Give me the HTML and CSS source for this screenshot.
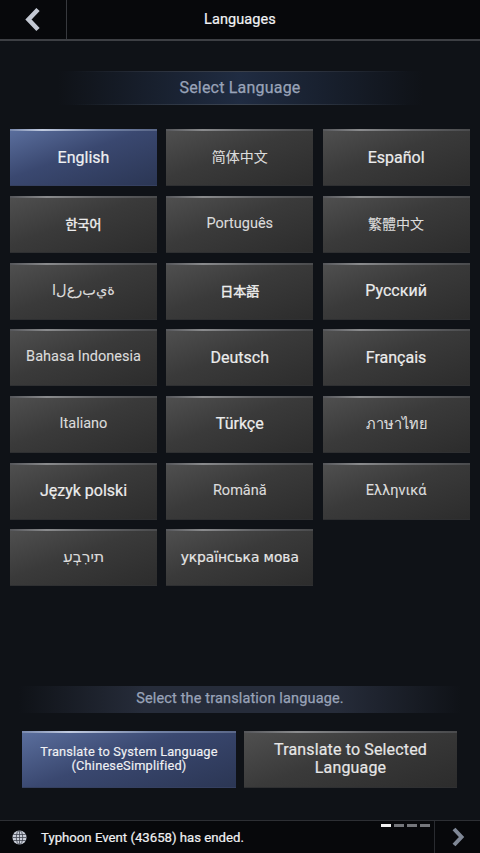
FILE: index.html
```html
<!DOCTYPE html>
<html lang="en">
<head>
<meta charset="utf-8">
<title>Languages</title>
<link rel="stylesheet" href="styles.css">
</head>
<body>
<div class="app">
  <header class="topbar">
    <button class="back" aria-label="Back">
      <svg width="18" height="26" viewBox="0 0 18 26"><path d="M14 2.500 L4.500 12.500 L14 22.500" fill="none" stroke="#c3c8d3" stroke-width="4.600"/></svg>
    </button>
    <h1 class="title">Languages</h1>
  </header>

  <main class="content">
    <div class="band band-select">Select Language</div>
    <div class="grid">
      <button class="btn active strong">English</button>
      <button class="btn cjk">简体中文</button>
      <button class="btn strong">Español</button>
      <button class="btn strong cjk">한국어</button>
      <button class="btn">Português</button>
      <button class="btn cjk">繁體中文</button>
      <button class="btn"><bdo dir="ltr">ا&zwnj;ل&zwnj;ع&zwnj;ر&zwnj;ب&zwnj;ي&zwnj;ة</bdo></button>
      <button class="btn strong cjk">日本語</button>
      <button class="btn strong">Русский</button>
      <button class="btn">Bahasa Indonesia</button>
      <button class="btn strong">Deutsch</button>
      <button class="btn strong">Français</button>
      <button class="btn">Italiano</button>
      <button class="btn strong">Türkçe</button>
      <button class="btn">ภาษาไทย</button>
      <button class="btn strong">Język polski</button>
      <button class="btn">Română</button>
      <button class="btn">Ελληνικά</button>
      <button class="btn heb"><bdo dir="ltr">עִבְרִית</bdo></button>
      <button class="btn ukr">українська мова</button>
    </div>
    <div class="spacer"></div>
    <div class="band band-translate">Select the translation language.</div>
    <div class="actions">
      <button class="btn active action-sys">Translate to System Language<br>(ChineseSimplified)</button>
      <button class="btn action-sel">Translate to Selected Language</button>
    </div>
  </main>

  <footer class="ticker">
    <svg class="globe" width="15" height="15" viewBox="0 0 16 16">
      <circle cx="8" cy="8" r="7.500" fill="#c9ced9"/>
      <g fill="none" stroke="#3a3e48" stroke-width="0.800">
        <ellipse cx="8" cy="8" rx="3.400" ry="7.500"/>
        <path d="M8 .5V15.500M1.300 4.800H14.700M.5 8H15.500M1.300 11.200H14.700"/>
      </g>
    </svg>
    <span class="msg">Typhoon Event (43658) has ended.</span>
    <div class="dots"><i class="on"></i><i></i><i></i><i></i></div>
    <button class="next" aria-label="Next">
      <svg width="14" height="20" viewBox="0 0 14 20"><path d="M3 2 L10.500 10 L3 18" fill="none" stroke="#7f8796" stroke-width="4"/></svg>
    </button>
  </footer>
</div>
</body>
</html>
```

FILE: styles.css
```css
* { box-sizing: border-box; }
html, body { margin: 0; padding: 0; }
body { background: #0f1217; font-family: Roboto, "Noto Sans CJK SC", "DejaVu Sans", sans-serif; }
button { font-family: inherit; border: 0; padding: 0; margin: 0; }
.app { width: 480px; height: 853px; display: flex; flex-direction: column; overflow: hidden; }

.topbar { height: 41px; flex: none; display: flex; background: #07080b; border-bottom: 2px solid #3d3f44; }
.back { width: 67px; height: 39px; background: none; border-right: 1px solid #37393e; display: flex; align-items: center; justify-content: center; padding-right: 1px; }
.title { margin: 0; flex: 1; padding-right: 67px; text-align: center; font-size: 14.500px; font-weight: 400; line-height: 39px; color: #f2f3f5; letter-spacing: .1px; -webkit-text-stroke: .2px #f2f3f5; }

.content { flex: 1; display: flex; flex-direction: column; min-height: 0; }
.band { text-align: center; color: #99a3b8; font-weight: 400; -webkit-text-stroke: .25px #99a3b8; }
.band-select { margin-top: 30px; height: 34px; line-height: 33px; font-size: 16px; letter-spacing: .2px;
  background:
    linear-gradient(90deg, transparent 15%, #3a3f49 50%, transparent 85%) top / 100% 1px no-repeat,
    linear-gradient(90deg, transparent 15%, #3c4450 50%, transparent 85%) bottom / 100% 1px no-repeat,
    linear-gradient(90deg, transparent 12%, #202c42 50%, transparent 88%); }
.band-translate { height: 27px; line-height: 26px; font-size: 14.500px; letter-spacing: .15px;
  background: linear-gradient(90deg, transparent 4%, #262c3a 30%, #262c3a 70%, transparent 96%); }

.grid { margin-top: 24.300px; padding: 0 10px; display: grid; grid-template-columns: repeat(3, 147px); column-gap: 9.300px; grid-auto-rows: 57px; row-gap: 9.650px; }
.btn { display: flex; align-items: center; justify-content: center; text-align: center; color: #dcdcdc; font-size: 14.500px; padding-bottom: 1px; -webkit-text-stroke: .1px #dcdcdc;
  background: linear-gradient(160deg, #505050 0%, #3a3a3a 45%, #2c2c2c 100%);
  position: relative; border-bottom: 1px solid #2f3032; }
.btn::before { content: ""; position: absolute; left: 0; right: 0; top: 0; height: 2px;
  background: linear-gradient(90deg, #55565a 0, #8a8b8d 25%, #626366 60%, #4a4b4d 100%); }
.btn.strong { font-size: 16px; color: #ececec; -webkit-text-stroke: .2px #ececec; padding-bottom: 0; }
.btn.cjk { font-size: 14px; padding-bottom: 2px; }
.btn.strong.cjk { font-size: 13px; padding-bottom: 1px; -webkit-text-stroke: .45px #ececec; }
.btn.heb { font-size: 15.500px; }
.btn.ukr { font-size: 13.800px; font-family: "DejaVu Sans", sans-serif; letter-spacing: -.05px; color: #e6e6e6; -webkit-text-stroke: .2px #e6e6e6; padding-bottom: 0; }
.btn.active { color: #f0f1f4;
  background: linear-gradient(160deg, #5b6f9e 0%, #3a4870 45%, #2b3654 100%); border-bottom-color: #354060; }
.btn.active::before { background: linear-gradient(90deg, #7888ad 0, #c1cbe0 22%, #7484a8 60%, #5a6788 100%); }

.spacer { flex: 1; }
.actions { margin: 18px 0 32px; padding: 0 23px 0 22px; display: grid; grid-template-columns: 214px 213px; column-gap: 8px; }
.actions .btn { height: 57px; }
.btn.action-sys { font-size: 12.800px; line-height: 14px; letter-spacing: .18px; padding-bottom: 1px; -webkit-text-stroke: .15px #f0f1f4; }
.btn.action-sel { font-size: 16px; line-height: 18px; padding: 0 24px 0; letter-spacing: .15px; color: #e6e6e6; -webkit-text-stroke: .2px #e6e6e6; }

.ticker { height: 33px; flex: none; background: #07080b; border-top: 1px solid #2d2f34; display: flex; align-items: center; position: relative; }
.globe { margin-left: 12px; flex: none; }
.msg { margin-left: 14px; flex: 1; font-size: 13.200px; color: #f0f1f3; -webkit-text-stroke: .2px #f0f1f3; }
.dots { position: absolute; top: 3px; right: 50px; display: flex; gap: 3px; }
.dots i { width: 10px; height: 3px; background: #74767b; display: block; }
.dots i.on { background: #f2f2f2; }
.next { width: 46px; height: 32px; background: none; border-left: 1px solid #292b30; display: flex; align-items: center; justify-content: center; }
```
